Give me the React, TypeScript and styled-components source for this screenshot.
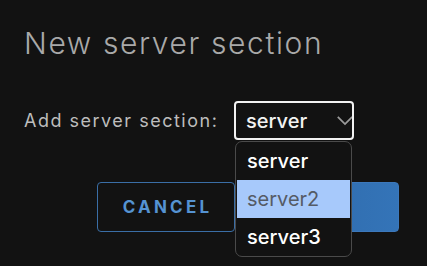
import React from "react";
import styled, { createGlobalStyle } from "styled-components";

const GlobalStyle = createGlobalStyle`
  html, body {
    margin: 0;
    padding: 0;
    background: #121212;
    font-family: Inter, "Noto Sans", sans-serif;
  }
`;

const options = ["server", "server2", "server3"];
const highlighted = "server2";

const App = () => {
  return (
    <>
      <GlobalStyle />
      <Dialog>
        <Title>New server section</Title>
        <FieldRow>
          <Label>Add server section:</Label>
          <SelectWrap>
            <Select>
              <span>server</span>
              <Chevron viewBox="0 0 20 12">
                <path d="M2 2 L10 10 L18 2" />
              </Chevron>
            </Select>
            <Menu>
              {options.map((opt) => (
                <Option key={opt} $active={opt === highlighted}>
                  {opt}
                </Option>
              ))}
            </Menu>
          </SelectWrap>
        </FieldRow>
        <Actions>
          <Button>CANCEL</Button>
          {/* label of the primary button is covered by the open menu */}
          <Button $primary aria-label="Add" />
        </Actions>
      </Dialog>
    </>
  );
};

export default App;

const Dialog = styled.div`
  width: 427px;
  height: 266px;
  box-sizing: border-box;
  padding: 24px 28px 0 24px;
  display: flex;
  flex-direction: column;
`;

const Title = styled.h1`
  margin: 0;
  font-size: 30px;
  font-weight: 300;
  letter-spacing: 1.6px;
  color: #a9a9a9;
  line-height: 38px;
`;

const FieldRow = styled.div`
  display: flex;
  align-items: center;
  gap: 16px;
  margin-top: 39px;
`;

const Label = styled.span`
  font-size: 18px;
  letter-spacing: 1.5px;
  color: #bdbdbd;
  width: 194px;
  white-space: nowrap;
`;

const SelectWrap = styled.div`
  position: relative;
`;

const Select = styled.div`
  width: 120px;
  height: 39px;
  box-sizing: border-box;
  border: 2px solid #f2f2f2;
  border-radius: 4px;
  display: flex;
  align-items: center;
  padding: 0 0 0 10px;
  font-size: 20px;
  font-weight: 500;
  color: #f2f2f2;
  overflow: hidden;
  > span {
    flex: 1;
  }
`;

const Chevron = styled.svg`
  width: 18px;
  height: 11px;
  margin-right: -2px;
  fill: none;
  stroke: #9a9a9a;
  stroke-width: 2;
`;

const Menu = styled.div`
  position: absolute;
  top: 40px;
  left: 1px;
  width: 117px;
  box-sizing: border-box;
  border: 1.5px solid #4a4a4a;
  border-radius: 7px;
  background: #121212;
  padding: 0 1px;
  overflow: hidden;
  z-index: 2;
`;

const Option = styled.div<{ $active?: boolean }>`
  height: 38px;
  display: flex;
  align-items: center;
  padding-left: 10px;
  font-size: 20px;
  font-weight: ${(p) => (p.$active ? 400 : 500)};
  color: ${(p) => (p.$active ? "#555b66" : "#ffffff")};
  background: ${(p) => (p.$active ? "#a7c9fb" : "transparent")};
`;

const Actions = styled.div`
  display: flex;
  justify-content: flex-end;
  gap: 10px;
  margin-top: 42px;
  padding-left: 72px;
`;

const Button = styled.button<{ $primary?: boolean }>`
  flex: ${(p) => (p.$primary ? "0 0 154px" : "0 0 138px")};
  height: 50px;
  box-sizing: border-box;
  border-radius: 4px;
  border: 1px solid ${(p) => (p.$primary ? "#3c78bb" : "#3a6ea6")};
  background: ${(p) =>
    p.$primary ? "linear-gradient(90deg, #2c67a6, #3474b8)" : "transparent"};
  color: ${(p) => (p.$primary ? "#ffffff" : "#5593d2")};
  font-family: Inter, "Noto Sans", sans-serif;
  font-size: 17px;
  font-weight: 700;
  letter-spacing: 3.2px;
  padding: 0 0 0 3px;
`;
